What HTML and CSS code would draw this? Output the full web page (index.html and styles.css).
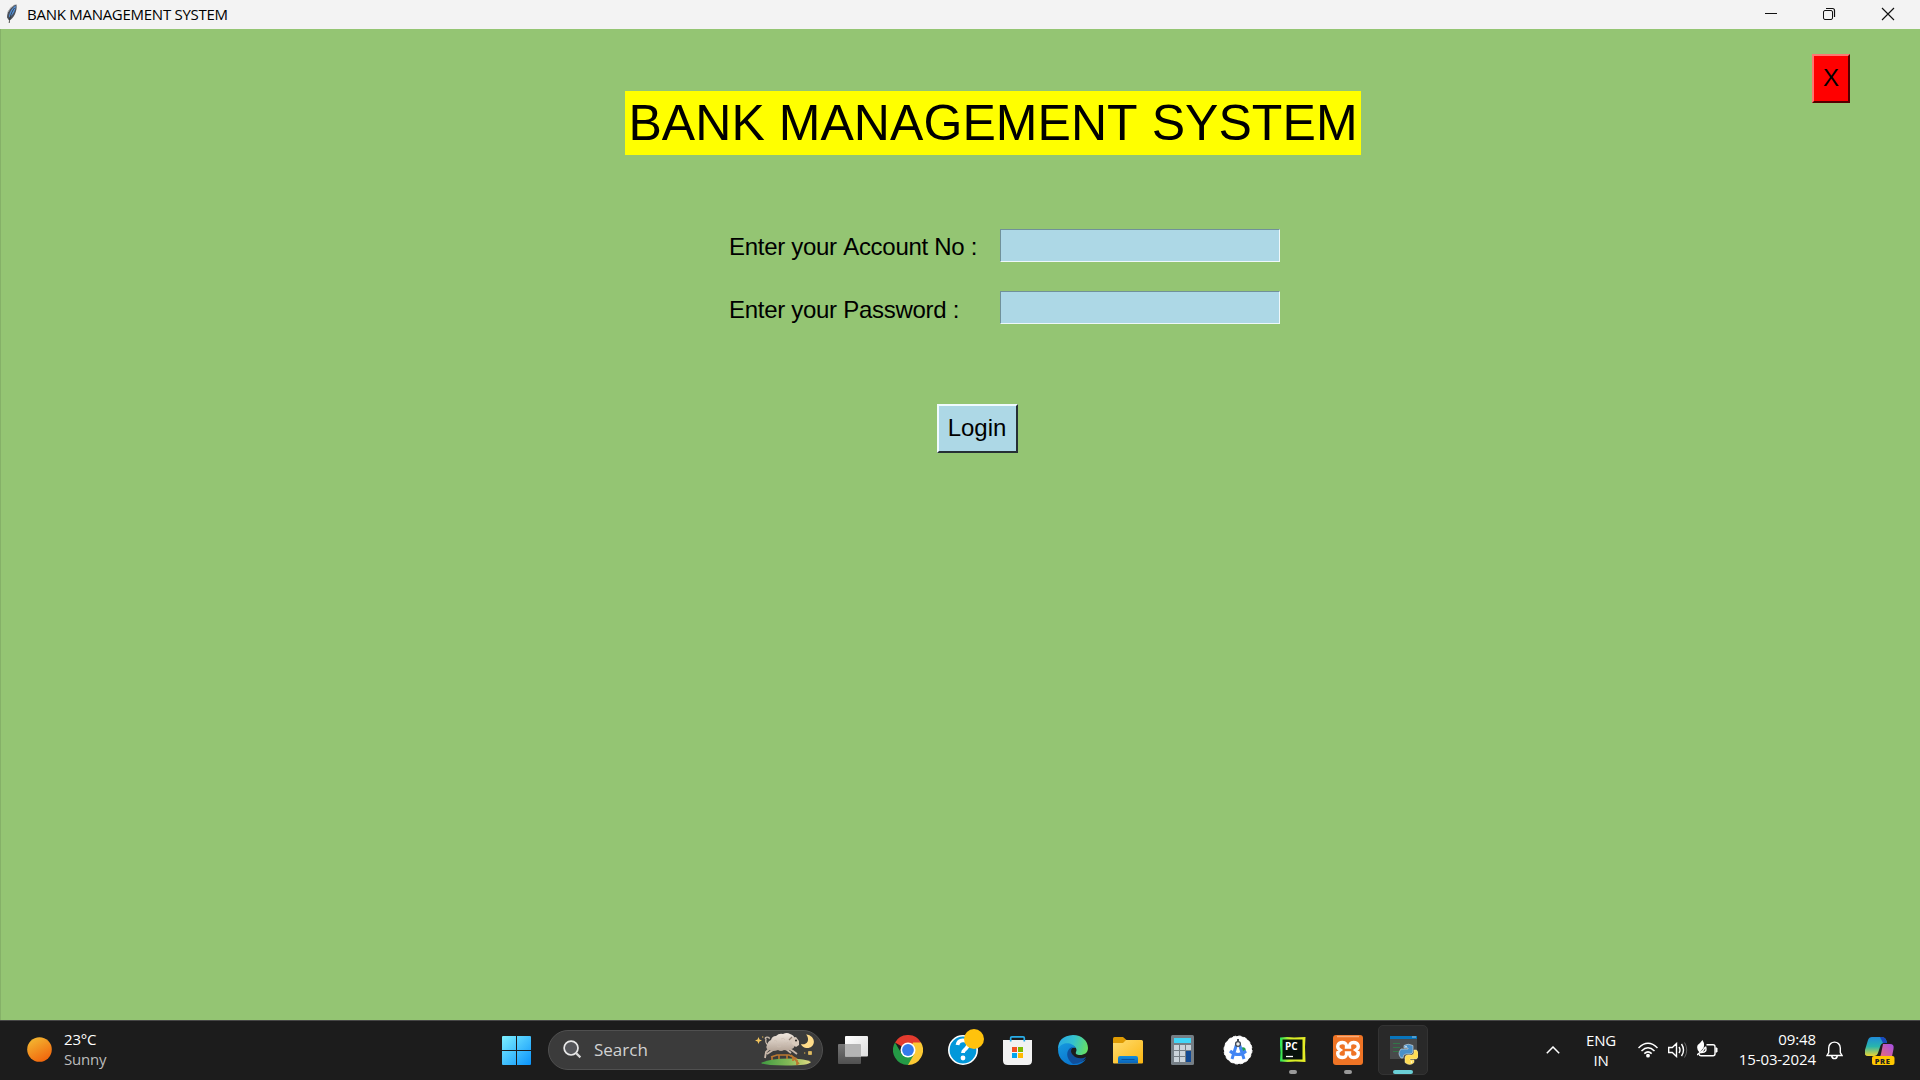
FILE: index.html
```
<!DOCTYPE html>
<html lang="en">
<head>
<meta charset="utf-8">
<title>BANK MANAGEMENT SYSTEM</title>
<link rel="stylesheet" href="styles.css">
</head>
<body>
<header class="titlebar">
  <svg class="feather" viewBox="0 0 12 20"><path d="M10.500.5C5.500 1.500 1 7 1 13.500l2 3C7.500 15 11.500 7 10.500.5z" fill="#4b515c"/><path d="M9.800 1.500C6 4 3.200 8 3 13.500c3.500-2 6.500-6.500 6.800-12z" fill="#5595df"/><path d="M8.500 4C5.500 8 4 12 3.200 19" stroke="#2a2a2a" stroke-width=".8" fill="none"/><path d="M1.500 8.500Q4 3.500 8.500 1" stroke="#aaa" fill="none"/></svg>
  <span class="window-name">BANK MANAGEMENT SYSTEM</span>
  <div class="window-controls">
    <svg viewBox="0 0 58 29"><path d="M23 13.500h12" stroke="#111"/></svg>
    <svg viewBox="0 0 58 29"><rect x="23.500" y="10.500" width="9" height="9" rx="1.500" fill="none" stroke="#111"/><path d="M26 8.500h6.500q2 0 2 2V17" fill="none" stroke="#111" stroke-width="1.200"/></svg>
    <svg viewBox="0 0 58 29"><path d="M24 8l12 12M36 8L24 20" stroke="#111" stroke-width="1.150"/></svg>
  </div>
</header>
<main class="app">
  <button class="tk-button exit">X</button>
  <h1 class="heading">BANK MANAGEMENT SYSTEM</h1>
  <form class="login">
    <label class="field"><span>Enter your Account No :</span><input type="text"></label>
    <label class="field password"><span>Enter your Password :</span><input type="password"></label>
    <button class="tk-button submit" type="button">Login</button>
  </form>
</main>
<footer class="taskbar">
  <div class="weather">
    <svg class="sun" viewBox="0 0 25 25"><defs><linearGradient id="sun" x1=".2" y1="0" x2=".75" y2="1"><stop stop-color="#f3b932"/><stop offset="1" stop-color="#f2620b"/></linearGradient></defs><circle cx="12.500" cy="12.500" r="12.300" fill="url(#sun)"/></svg>
    <div class="weather-text"><div>23°C</div><div class="muted">Sunny</div></div>
  </div>
  <svg class="start" viewBox="0 0 29 29"><defs><linearGradient id="win" x1="0" y1="0" x2="1" y2="1"><stop stop-color="#7df0ff"/><stop offset="1" stop-color="#0a93fb"/></linearGradient></defs><path fill="url(#win)" d="M1 0h13v14H0V1q0-1 1-1zM15 0h13q1 0 1 1v13H15zM0 15h14v14H1q-1 0-1-1zM15 15h14v13q0 1-1 1H15z"/></svg>
  <div class="search">
    <svg class="lens" viewBox="0 0 20 20"><circle cx="8.500" cy="8.500" r="7.300" fill="#55565a" stroke="#e9e9e9" stroke-width="1.800"/><path d="M13.800 13.800l4.500 4.500" stroke="#d8d8d8" stroke-width="2.300"/></svg>
    <span>Search</span>
    <svg class="sheep" viewBox="0 0 60 34">
      <defs><linearGradient id="hill"><stop stop-color="#3f9a42"/><stop offset=".55" stop-color="#83b957"/><stop offset="1" stop-color="#e3dd83"/></linearGradient><linearGradient id="wool" x1="0" y1="0" x2="0" y2="1"><stop stop-color="#f0e7de"/><stop offset="1" stop-color="#b5a598"/></linearGradient></defs>
      <path d="M6 30q9-4.500 28-4.500 17 0 22 3.500-2 3.500-25 3.500-22 0-25-2.500z" fill="url(#hill)"/>
      <path d="M17 27v-4m7 3v-4m8 4v-4M16 24l6-2 12 0 8 4" stroke="#bb7830" stroke-width="1.600" fill="none"/>
      <path d="M36 22l8 9m-6-7v4m4-1v5" stroke="#bb7830" stroke-width="1.800"/>
      <path d="M15 15l-4 4-1 6M18 17l-6 4M33 15l5 3 4 3M31 16l5 4" stroke="#c8b7a9" stroke-width="1.800" fill="none"/>
      <path d="M13 12Q10 10 11 6q-2-1 1-2 3 0 2 2" fill="none" stroke="#d0c0b0" stroke-width="1.200"/>
      <path d="M14 17q-4-1-2-5 1-4 4-5 1-4 5-4 3-3 7-2 4-2 7 0 4 1 5 5 3 3 0 6-1 4-4 4-4 2-7 1-3 2-6 0-5 2-9 0z" fill="url(#wool)"/>
      <path d="M19 8q2-2 3 1m4-3q3-2 4 1m-8 6q2 2 4 0m3-3q3 2 4-1" fill="none" stroke="#cdbfb2" stroke-width=".7"/>
      <path d="M36 5l5-1 3 4v4l-3 2-4-3z" fill="#d8cabc"/><circle cx="41" cy="7.500" r="1" fill="#292725"/><path d="M37 4l-3 3" stroke="#8c7c70" stroke-width="1.200"/>
      <path d="M51 1.500c11 1 10 14.500 0 13.500q-4-1-5-4c7 2 9-5.500 5-9.500z" fill="#ffdc8a"/>
      <path d="M3.500 4l1 2.500L7 7.500l-2.500 1-1 2.500-1-2.500L0 7.500l2.500-1z" fill="#f1c45d"/><path d="M7 4h1.300M49 20h1.300" stroke="#e6b74b"/><path d="M53 18h4v4h-4z" fill="#b49245"/><path d="M55 18v4m-2-2h4" stroke="#edd078" stroke-width=".9"/>
    </svg>
  </div>
  <nav class="apps">
    <div class="app-cell"><svg viewBox="0 0 30 30"><defs><linearGradient id="tv" x2="1" y2="1"><stop stop-color="#fff"/><stop offset="1" stop-color="#ddd"/></linearGradient><linearGradient id="tv2" x2="0" y2="1"><stop stop-color="#777"/><stop offset="1" stop-color="#505050"/></linearGradient></defs><rect y="9" width="23" height="20" rx="1" fill="url(#tv2)"/><rect x="7" y="1" width="23" height="20.500" rx="1" fill="url(#tv)"/><path d="M7 9h15q1 0 1 1v11.500H7z" fill="#b5b5b5"/></svg></div>
    <div class="app-cell"><svg viewBox="0 0 30 30"><path d="M15 15L2 7.500A15 15 0 0 1 28 7.500z" fill="#e33b2e"/><path d="M28 7.500A15 15 0 0 1 15 30l-1-8L20 7.500z" fill="#fcc934"/><path d="M2 7.500A15 15 0 0 0 15 30l6.200-11L15 21.800 8.800 19z" fill="#249a46"/><circle cx="15" cy="15" r="7.500" fill="#fff"/><circle cx="15" cy="15" r="5.900" fill="#347bec"/></svg></div>
    <div class="app-cell"><svg class="help" viewBox="0 0 36 36"><circle cx="15" cy="21" r="14.200" fill="#0298da" stroke="#fff" stroke-width="1.600"/><path d="M9.500 16q1-5.500 7-4.500 5 1.500 3 6-1 2-3 3.500-1.500 1-1.500 3" fill="none" stroke="#fff" stroke-width="3.800"/><circle cx="15" cy="29" r="2.400" fill="#fff"/><circle cx="26" cy="10" r="10" fill="#ffc20d"/></svg></div>
    <div class="app-cell"><svg viewBox="0 0 30 30"><path d="M0 5h29v20.500q0 4.500-4.500 4.500H4.500Q0 30 0 25.500z" fill="#f2f2f2"/><path d="M7.700 6.500V3q0-1.200 1.200-1.200h11.200q1.200 0 1.200 1.200v3.500" fill="none" stroke="#28ade8" stroke-width="1.700"/><path d="M9 12h5v5H9z" fill="#f25022"/><path d="M15 12h5v5h-5z" fill="#7fba00"/><path d="M9 18h5v5H9z" fill="#00a4ef"/><path d="M15 18h5v5h-5z" fill="#ffb900"/></svg></div>
    <div class="app-cell"><svg viewBox="0 0 30 30"><defs><linearGradient id="e1" x1="0" y1=".3" x2="1" y2=".5"><stop stop-color="#28a9e6"/><stop offset=".5" stop-color="#35c2cd"/><stop offset="1" stop-color="#65df65"/></linearGradient><linearGradient id="e2" x2=".7" y2="1"><stop stop-color="#1699df"/><stop offset="1" stop-color="#0870cb"/></linearGradient></defs><path d="M0 14Q0 1 15 0c9 0 15 6 15 13 0 5-4 7-8 7-3 0-5-1-4-3 3-5-7-12-18-3z" fill="url(#e1)"/><path d="M0 14C5 5 15 8 18 13c-7-2-8 7-4 11 4 5 10 3 14 0-5 8-17 8-23 2Q0 22 0 14z" fill="url(#e2)"/><path d="M15 12c-6 1-9 10 0 17 6 0 11-3 13-7-4 2-10 2-13-2-3-3-2-6 0-8z" fill="#104f9b"/></svg></div>
    <div class="app-cell"><svg viewBox="0 0 30 30"><defs><linearGradient id="fo" x2="1" y2="1"><stop stop-color="#ffdd70"/><stop offset="1" stop-color="#fbb510"/></linearGradient><linearGradient id="fb" x2="0" y2="1"><stop stop-color="#138edc"/><stop offset="1" stop-color="#0961b8"/></linearGradient></defs><path d="M0 3.500Q0 2 1.500 2H10l3.500 3v8H0z" fill="#df9b03"/><path d="M0 8h10l3-3h15.500Q30 5 30 6.500v21q0 1-1 1H1q-1 0-1-1z" fill="url(#fo)"/><path d="M5 28.500V23q0-2 2-2h16q2 0 2 2v5.500z" fill="url(#fb)"/><path d="M8.500 24.500h13" stroke="#08529d"/></svg></div>
    <div class="app-cell"><svg viewBox="0 0 30 30"><rect x="3" width="23" height="30" rx="1.500" fill="#757e85"/><path d="M6 3h17v5H6z" fill="#41d6f7"/><path d="M6 10h5v5H6zm6 0h5v5h-5zm6 0h5v5h-5zM6 16h5v5H6zm6 0h5v5h-5zM6 22h5v5H6zm6 0h5v5h-5z" fill="#cbd4db"/><path d="M18 16h5v11h-5z" fill="#114993"/></svg></div>
    <div class="app-cell"><svg viewBox="0 0 30 30"><circle cx="15" cy="15" r="14" fill="#fff" stroke="#fff" stroke-dasharray="3 2.500"/><circle cx="20" cy="15" r="2.700" fill="#26a14d"/><path d="M14 8L9 24m7-16l5 16M7 16q8 7 16 0" fill="none" stroke="#4285f4" stroke-width="3"/><circle cx="15" cy="9" r="2.400" fill="#eee" stroke="#434a54" stroke-width="1.300"/><path d="M15 4v3" stroke="#434a54" stroke-width="2"/></svg></div>
    <div class="app-cell running"><svg viewBox="0 0 30 30"><defs><linearGradient id="pc"><stop stop-color="#20e35b"/><stop offset=".4" stop-color="#d5ee27"/><stop offset="1" stop-color="#e6ec26"/></linearGradient></defs><path d="M2 2.500l7-.5 7 .5L27.500 2l-.5 10 .5 15-10-.5-8 .5-7.500-.5.5-9-.5-7z" fill="url(#pc)"/><path d="M4.500 4.500h20v20h-20z" fill="#07110b"/><path d="M8 21.500h7" stroke="#fff" stroke-width="1.300"/><text class="pc-label" x="7" y="14.800">PC</text></svg></div>
    <div class="app-cell running"><svg viewBox="0 0 30 30"><rect width="30" height="30" rx="3" fill="#ef7425"/><path d="M4 1.500h22" stroke="#f8aa77" stroke-width="1.500"/><path d="M9.500 7.500c3 0 4.200 2 4 4.500h3c-.2-2.500 1-4.500 4-4.500 5 0 6.500 5 2.500 7.500 4 2.500 2.500 7.500-2.500 7.500-3 0-4.200-2-4-4.500h-3c.2 2.500-1 4.500-4 4.500-5 0-6.500-5-2.500-7.500-4-2.500-2.500-7.500 2.500-7.500z" fill="none" stroke="#fff" stroke-width="3.300"/></svg></div>
    <div class="app-cell running active"><svg viewBox="0 0 30 30"><path d="M2 1h27v23H2z" fill="#484a4b"/><path d="M2 1h27v3H2z" fill="#0875bc"/><path d="M5 8.500h7m-7 4h7m-7 4h6" stroke="#327548"/><path d="M25 1v2m2-2v2" stroke="#9cc6df"/><path d="M16 10.500q4-2.500 9 0V16q0 3-3 3h-4q-3 0-3 4h-2q-4-4.500 0-9h7v-1h-4z" fill="#4a90c8" stroke="#d7dfe4" stroke-width=".6"/><path d="M26 15h2.500q4 5 0 9H22v1h4v2.500q-4 4-9 0V23q0-3 3-3h3.500q2.500 0 2.500-3z" fill="#ffdc54" stroke="#fff0b0" stroke-width=".5"/><circle cx="18" cy="11.800" r=".8" fill="#fff"/><circle cx="23.500" cy="27" r=".8" fill="#fff"/></svg></div>
  </nav>
  <div class="tray">
    <svg class="chevron" viewBox="0 0 14 8"><path d="M.8 7.200L7 1l6.200 6.200" stroke="#fff" stroke-width="1.500" fill="none"/></svg>
    <div class="language">ENG<br>IN</div>
    <svg class="wifi" viewBox="0 0 20 16"><path d="M.5 6Q10-3.500 19.500 6M3.500 9Q10 2.500 16.500 9M6.300 11.600q3.700-3.500 7.400 0" stroke="#fff" stroke-width="1.500" fill="none"/><circle cx="10" cy="13.700" r="1.900" fill="#fff"/></svg>
    <svg class="volume" viewBox="0 0 20 16"><path d="M.7 5.500h3.600L8.500 1.500v13L4.300 10.500H.7zM11 5q2 3 0 6m2.500-9q4 6 0 12" stroke="#fff" stroke-width="1.400" fill="none"/><path d="M16.500.5q4.500 7.500 0 15" stroke="#646464" fill="none"/></svg>
    <svg class="battery" viewBox="0 0 21 18"><path d="M9.500 4.700H16q2 0 2 2v7q0 2-2 2H4q-1.500 0-2-1.500" fill="none" stroke="#fff" stroke-width="1.400"/><path d="M18.500 8H20v4h-1.500" stroke="#fff" fill="#fff"/><path d="M5.500 0Q8 4 6.500 8L2.500 12.500Q-1 9 .7 5 2.500 4 5.500 0z" fill="#fff"/><path d="M8.500 6.500q2 6-4 6l3.500-5M0 15l5-4" stroke="#fff" stroke-width="1.400" fill="none"/></svg>
    <div class="clock">09:48<br>15-03-2024</div>
    <svg class="bell" viewBox="0 0 17 19"><path d="M1 14.500l1.700-3V7C2.700-.8 14.300-.8 14.300 7v4.500l1.700 3zM5.700 15q.5 2.600 2.800 2.600t2.800-2.600" stroke="#fff" stroke-width="1.400" fill="none"/></svg>
    <svg class="copilot" viewBox="0 0 30 30"><defs><linearGradient id="c1" x2="0" y2="1"><stop stop-color="#208bd9"/><stop offset=".5" stop-color="#28b5ac"/><stop offset="1" stop-color="#edd632"/></linearGradient><linearGradient id="c2" x1="1" y1="0" x2="0" y2="1"><stop stop-color="#a34ee9"/><stop offset="1" stop-color="#fa725c"/></linearGradient></defs><path d="M18 8h7q4.500 0 3.500 5l-2 10H11q4 0 5-5z" fill="url(#c2)"/><path d="M7 1h10q4 0 5 6h-3q-3 0-4 4l-2 6q-1 3-4 3H3q-4.500 0-3-6L3 4q1-3 4-3z" fill="url(#c1)"/><path d="M15 1h2q4 0 5 6h-4z" fill="#1948be"/><rect x="7" y="20" width="22.500" height="9" rx="2" fill="#ffc700"/><text class="pre-label" x="9.700" y="27.500">PRE</text></svg>
  </div>
</footer>
</body>
</html>
```
FILE: styles.css
```
* { box-sizing: border-box; }
body {
  margin: 0;
  width: 1920px;
  height: 1080px;
  overflow: hidden;
  display: flex;
  flex-direction: column;
  background: #94c573;
  font-family: "Liberation Sans", Arial, sans-serif;
}
svg { display: block; flex: none; }

.titlebar {
  height: 29px;
  flex: none;
  display: flex;
  align-items: center;
  padding-left: 6px;
  background: #f3f3f3;
  color: #000;
}
.feather { width: 12px; height: 20px; margin-top: -1px; }
.window-name {
  margin: -2px 0 0 9px;
  font: 15px/20px "Open Sans", sans-serif;
  letter-spacing: -.27px;
}
.window-controls { display: flex; margin-left: auto; margin-right: 4px; }
.window-controls svg { width: 58px; height: 29px; }

.app {
  flex: 1;
  display: flex;
  flex-direction: column;
  border-left: 1px solid #85b168;
  font-kerning: none;
  color: #000;
}
.tk-button {
  display: flex;
  align-items: center;
  justify-content: center;
  padding: 0;
  border: 2px solid;
  font: 24px/28px "Liberation Sans", Arial, sans-serif;
  color: #000;
}
.exit {
  width: 38px;
  height: 49px;
  margin: 25px 70px 0 auto;
  padding-bottom: 2px;
  background: #f00;
  border-color: #ff7771 #500 #500 #ff7771;
}
.heading {
  width: 736px;
  height: 64px;
  margin: -12px 0 0 624px;
  background: #ff0;
  font-size: 50px;
  font-weight: 400;
  line-height: 65px;
  letter-spacing: .06px;
  text-align: center;
  white-space: nowrap;
}
.login {
  margin: 74px 0 0 728px;
  width: 551px;
  display: flex;
  flex-direction: column;
}
.field {
  height: 33px;
  margin-bottom: 29px;
  display: flex;
  justify-content: space-between;
  font-size: 24px;
  line-height: 36px;
  letter-spacing: -.29px;
  white-space: nowrap;
}
.password { line-height: 38px; }
.field input {
  width: 280px;
  height: 33px;
  padding: 0 4px;
  background: #add8e6;
  border: 1.500px solid;
  border-color: #70919a #eef8fa #eef8fa #70919a;
  outline: none;
}
.submit {
  width: 81px;
  height: 49px;
  margin: 51px 0 0 208px;
  padding: 0 1px 1px 0;
  background: #add8e6;
  border-color: #f0fbff #263035 #263035 #f0fbff;
}

.taskbar {
  height: 60px;
  flex: none;
  display: flex;
  align-items: center;
  padding-bottom: 2px;
  background: #1c1c1c;
  border-top: 1px solid #464646;
  color: #fff;
  font: 15px/20px "Open Sans", sans-serif;
}
.weather { width: 502px; padding-left: 27px; display: flex; gap: 12px; align-items: center; }
.sun { width: 25px; height: 25px; margin-top: -1px; }
.weather-text { letter-spacing: -.2px; margin-top: -1px; }
.muted { color: #bdbdbd; }
.start { width: 29px; height: 29px; margin-top: 2px; }
.search {
  width: 275px;
  height: 40px;
  margin-left: 17px;
  padding: 0 7px 0 14px;
  display: flex;
  align-items: center;
  border: 1px solid #505050;
  border-radius: 20px;
  background: #3b3b3b;
  color: #d2d2d2;
  font-size: 17px;
}
.search span { margin-top: 1px; }
.lens { width: 19px; height: 19px; margin-right: 12px; }
.sheep { width: 60px; height: 34px; margin-left: auto; }
.apps { display: flex; margin-left: 2px; }
.app-cell {
  position: relative;
  width: 50px;
  height: 50px;
  margin: 0 2.500px;
  display: grid;
  place-items: center;
  border: 1px solid transparent;
  border-radius: 5px;
}
.app-cell svg { width: 30px; height: 30px; }
.app-cell .help { width: 36px; height: 36px; margin: -6px -6px 0 0; }
.running::after {
  content: "";
  position: absolute;
  bottom: 0;
  left: 20px;
  width: 8px;
  height: 4px;
  border-radius: 2px;
  background: #999;
}
.active { background: #292929; border-color: #333; }
.active::after { left: 14px; width: 20px; background: #6acfd6; }
.pc-label { font: bold 10px "Open Sans", sans-serif; fill: #fff; }
.pre-label { font: 800 7.500px "Open Sans", sans-serif; letter-spacing: .6px; fill: #222; }

.tray { flex: 1; display: flex; align-items: center; }
.chevron { width: 14px; height: 8px; margin-left: 116px; }
.language { width: 40px; margin-left: 21px; text-align: center; letter-spacing: -.2px; }
.wifi { width: 20px; height: 16px; margin-left: 17px; }
.volume { width: 20px; height: 16px; margin-left: 10px; margin-top: 1px; }
.battery { width: 21px; height: 18px; margin-left: 9px; margin-top: -1px; }
.clock { width: 90px; margin-left: 8px; margin-top: -2px; text-align: right; letter-spacing: -.1px; }
.bell { width: 17px; height: 19px; margin-left: 10px; margin-top: 1px; }
.copilot { width: 30px; height: 30px; margin-left: 22px; margin-top: 3px; }
```
